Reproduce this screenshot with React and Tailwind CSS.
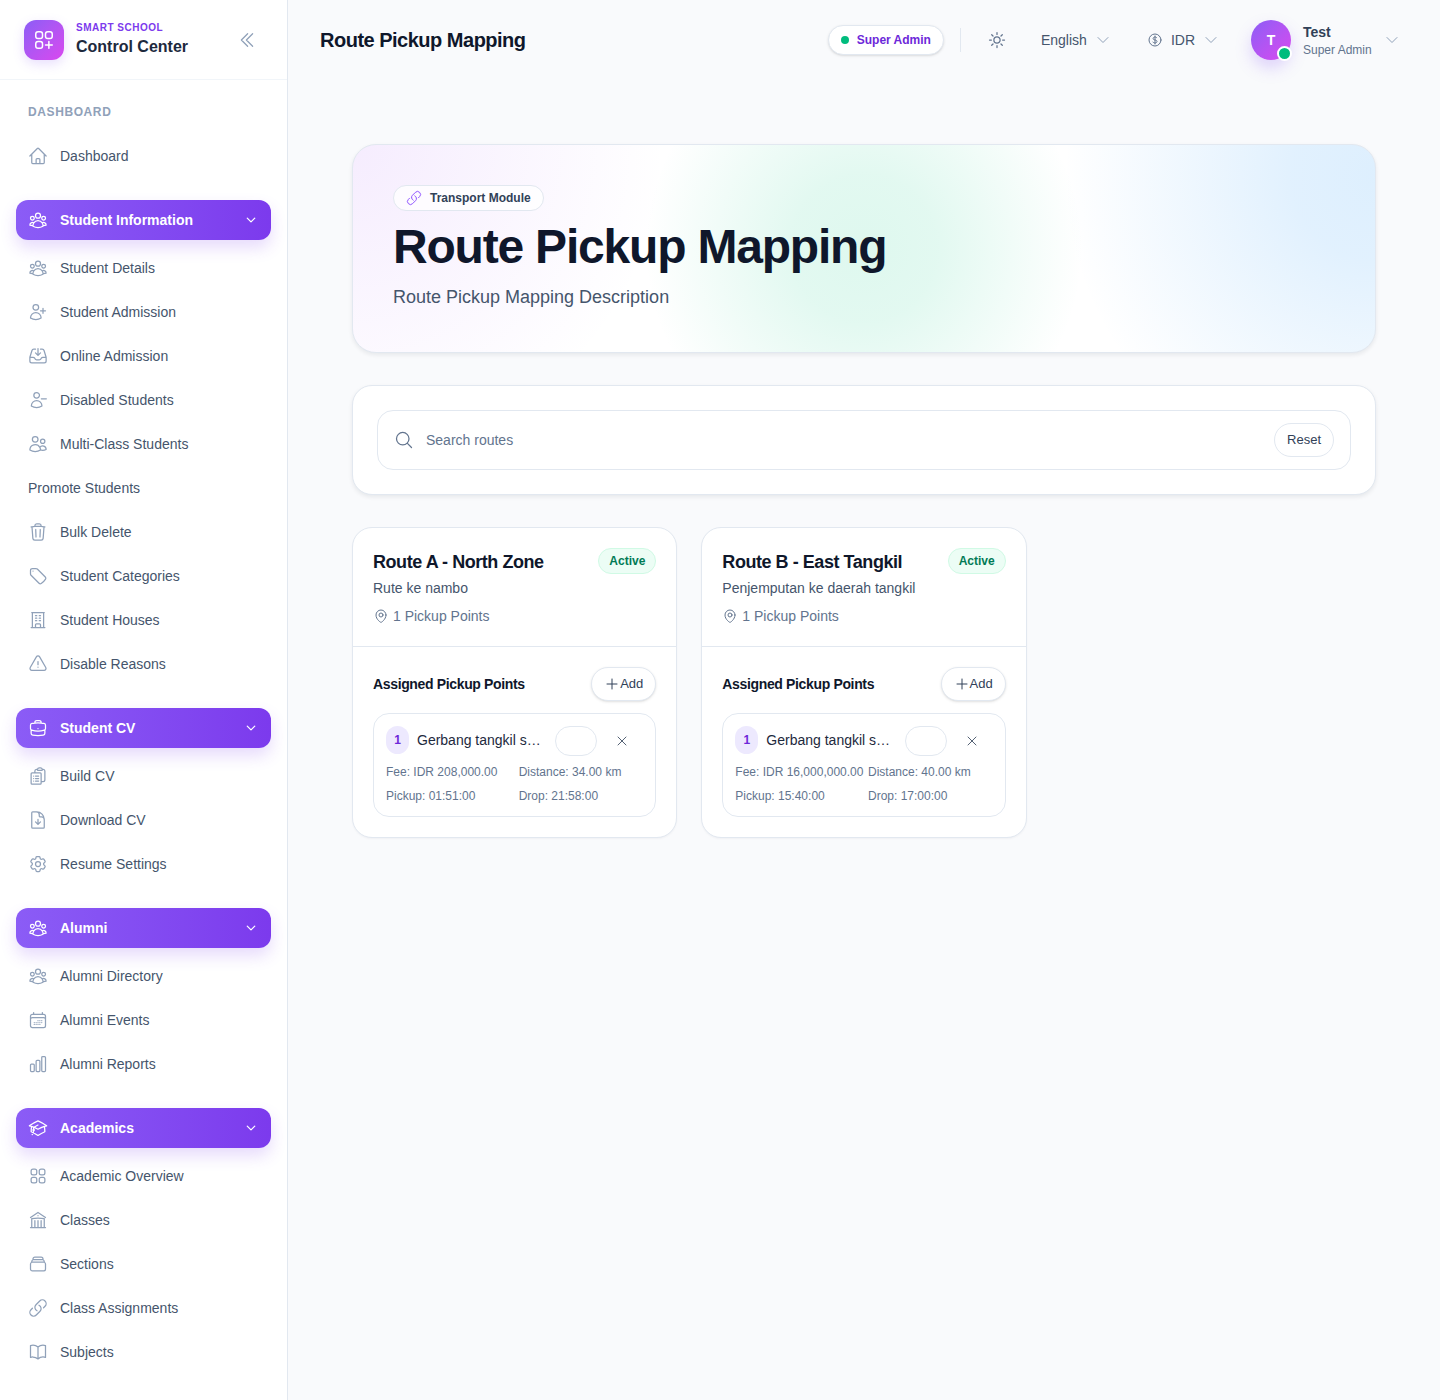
import React from "react";
import {
  HiOutlineUserGroup, HiOutlineHome, HiOutlineUserPlus, HiOutlineInboxArrowDown, HiOutlineUserMinus, HiOutlineUsers,
  HiOutlineTrash, HiOutlineTag, HiOutlineBuildingOffice, HiOutlineExclamationTriangle, HiOutlineBriefcase,
  HiOutlineClipboardDocumentList, HiOutlineDocumentArrowDown, HiOutlineCog6Tooth, HiOutlineCalendarDays, HiOutlineChartBar,
  HiOutlineAcademicCap, HiOutlineSquares2X2, HiOutlineBuildingLibrary, HiOutlineRectangleStack, HiOutlineLink, HiOutlineBookOpen,
  HiOutlineSun, HiOutlineCurrencyDollar, HiOutlineMapPin, HiOutlineMagnifyingGlass, HiOutlineXMark, HiOutlinePlus,
  HiOutlineChevronDown, HiOutlineChevronDoubleLeft, HiOutlineSquaresPlus,
} from "react-icons/hi2";

const groups = [
  { title: "Student Information", icon: HiOutlineUserGroup, items: [
    ["Student Details", HiOutlineUserGroup], ["Student Admission", HiOutlineUserPlus], ["Online Admission", HiOutlineInboxArrowDown],
    ["Disabled Students", HiOutlineUserMinus], ["Multi-Class Students", HiOutlineUsers], ["Promote Students", null],
    ["Bulk Delete", HiOutlineTrash], ["Student Categories", HiOutlineTag], ["Student Houses", HiOutlineBuildingOffice], ["Disable Reasons", HiOutlineExclamationTriangle],
  ]},
  { title: "Student CV", icon: HiOutlineBriefcase, items: [
    ["Build CV", HiOutlineClipboardDocumentList], ["Download CV", HiOutlineDocumentArrowDown], ["Resume Settings", HiOutlineCog6Tooth],
  ]},
  { title: "Alumni", icon: HiOutlineUserGroup, items: [
    ["Alumni Directory", HiOutlineUserGroup], ["Alumni Events", HiOutlineCalendarDays], ["Alumni Reports", HiOutlineChartBar],
  ]},
  { title: "Academics", icon: HiOutlineAcademicCap, items: [
    ["Academic Overview", HiOutlineSquares2X2], ["Classes", HiOutlineBuildingLibrary], ["Sections", HiOutlineRectangleStack],
    ["Class Assignments", HiOutlineLink], ["Subjects", HiOutlineBookOpen],
  ]},
];

function NavItem({ label, Icon }) {
  return (
    <div className="flex h-11 items-center gap-3 px-3 text-sm text-slate-600">
      {Icon && <Icon className="h-5 w-5 shrink-0 text-slate-400" />}
      <span>{label}</span>
    </div>
  );
}

function Sidebar() {
  return (
    <aside className="flex h-[1400px] w-[288px] shrink-0 flex-col overflow-hidden border-r border-slate-200 bg-white">
      <div className="flex h-20 shrink-0 items-center justify-between border-b border-slate-100 pl-6 pr-[30px]">
        <div className="flex items-center gap-3">
          <div className="flex h-10 w-10 items-center justify-center rounded-xl bg-gradient-to-br from-[#8b5cf6] to-[#d946ef] shadow-[0_4px_12px_rgba(139,92,246,0.2)]">
            <HiOutlineSquaresPlus className="h-6 w-6 text-white" />
          </div>
          <div className="-mt-px">
            <div className="text-[10px] font-semibold leading-[14px] tracking-[0.05em] text-[#7c3aed]">SMART SCHOOL</div>
            <div className="mt-[2px] text-base font-semibold leading-5 text-slate-800">Control Center</div>
          </div>
        </div>
        <HiOutlineChevronDoubleLeft className="h-5 w-5 text-slate-400" />
      </div>
      <nav className="px-4 pt-6">
        <div className="flex h-4 items-center px-3 text-xs font-semibold tracking-[0.05em] text-slate-400">DASHBOARD</div>
        <div className="mt-[14px]"><NavItem label="Dashboard" Icon={HiOutlineHome} /></div>
        {groups.map((g) => (
          <div key={g.title} className="mt-[22px]">
            <div className="flex h-10 items-center gap-3 rounded-xl bg-gradient-to-r from-[#8b5cf6] to-[#7c3aed] px-3 text-sm font-semibold text-white shadow-[0_8px_16px_rgba(124,58,237,0.18)]">
              <g.icon className="h-5 w-5 shrink-0" />
              <span className="flex-1">{g.title}</span>
              <HiOutlineChevronDown className="mr-[2px] h-3 w-3" strokeWidth={2.5} />
            </div>
            <div className="mt-1.5">
              {g.items.map(([label, Icon]) => <NavItem key={label} label={label} Icon={Icon} />)}
            </div>
          </div>
        ))}
      </nav>
    </aside>
  );
}

function TopBar() {
  return (
    <header className="flex h-20 items-center justify-between pl-8 pr-[40px]">
      <h1 className="text-xl font-bold tracking-tight text-slate-900">Route Pickup Mapping</h1>
      <div className="flex items-center">
        <div className="flex h-[30px] items-center gap-2 rounded-full border border-slate-200 bg-white px-3 shadow-sm">
          <span className="h-2 w-2 rounded-full bg-emerald-500" />
          <span className="text-xs font-bold text-[#6d28d9]">Super Admin</span>
        </div>
        <div className="mx-4 h-6 w-px bg-slate-200" />
        <HiOutlineSun className="ml-[10px] h-5 w-5 text-slate-500" />
        <div className="ml-[34px] flex items-center gap-2 text-sm text-slate-600">
          English <HiOutlineChevronDown className="h-4 w-4 text-slate-400" />
        </div>
        <div className="ml-[36px] flex items-center gap-2 text-sm text-slate-600">
          <HiOutlineCurrencyDollar className="h-4 w-4 text-slate-500" /> IDR
          <HiOutlineChevronDown className="h-4 w-4 text-slate-400" />
        </div>
        <div className="relative ml-8 flex h-10 w-10 items-center justify-center rounded-full bg-gradient-to-br from-[#8b5cf6] to-[#d946ef] text-sm font-bold text-white shadow-[0_8px_16px_rgba(139,92,246,0.25)]">
          T
          <span className="absolute -bottom-px -right-px h-[15px] w-[15px] rounded-full border-2 border-white bg-emerald-500" />
        </div>
        <div className="ml-3 w-[76px]">
          <div className="text-sm font-semibold leading-5 text-slate-700">Test</div>
          <div className="text-xs leading-4 text-slate-500">Super Admin</div>
        </div>
        <HiOutlineChevronDown className="ml-[5px] h-4 w-4 text-slate-400" />
      </div>
    </header>
  );
}

function RouteCard({ title, desc, fee, dist, pickup, drop }) {
  return (
    <div className="overflow-hidden rounded-[20px] border border-slate-200 bg-white shadow-[0_1px_2px_rgba(15,23,42,0.04)]">
      <div className="h-[119px] border-b border-slate-200 px-5 pt-5">
        <div className="flex items-start justify-between">
          <div className="pt-[2px] text-lg font-bold leading-6 tracking-tight text-slate-900">{title}</div>
          <span className="flex h-[26px] items-center rounded-full border border-emerald-100 bg-emerald-50 px-[10px] text-xs font-semibold text-emerald-700">Active</span>
        </div>
        <p className="mt-[4px] text-sm leading-5 text-slate-600">{desc}</p>
        <div className="mt-2 flex items-center gap-1 text-sm leading-5 text-slate-500">
          <HiOutlineMapPin className="h-4 w-4 text-slate-500" />
          1 Pickup Points
        </div>
      </div>
      <div className="px-5 pb-5 pt-5">
        <div className="flex items-center justify-between">
          <div className="text-sm font-bold tracking-tight text-slate-900">Assigned Pickup Points</div>
          <button className="flex h-[34px] items-center rounded-full border border-slate-200 bg-white px-3 text-[13px] text-slate-700 shadow-sm">
            <HiOutlinePlus className="h-4 w-4" />Add
          </button>
        </div>
        <div className="mt-3 rounded-2xl border border-slate-200 p-3">
          <div className="flex items-start">
            <span className="flex h-7 w-[23px] items-center justify-center rounded-full bg-violet-100 text-xs font-bold text-[#6d28d9]">1</span>
            <span className="ml-2 min-w-0 flex-1 truncate text-sm leading-7 text-slate-800">Gerbang tangkil setelah</span>
            <span className="ml-3 h-[30px] w-[42px] rounded-full border border-slate-200 bg-white" />
            <span className="ml-1 flex h-[30px] w-[42px] items-center justify-center text-slate-700">
              <HiOutlineXMark className="h-4 w-4" strokeWidth={1.25} />
            </span>
          </div>
          <div className="mt-2 grid grid-cols-2 gap-x-2 gap-y-2 whitespace-nowrap text-xs leading-4 text-slate-500">
            <div>Fee: {fee}</div>
            <div>Distance: {dist}</div>
            <div>Pickup: {pickup}</div>
            <div>Drop: {drop}</div>
          </div>
        </div>
      </div>
    </div>
  );
}

export default function App() {
  return (
    <div className="flex min-h-[1400px] bg-[#f9fafc] font-['Liberation_Sans',Arial,sans-serif]">
      <Sidebar />
      <div className="min-w-0 flex-1">
        <TopBar />
        <main className="px-16 pt-16">
          <section className="h-[209px] rounded-3xl border border-slate-200 bg-white bg-[radial-gradient(circle_at_0%_0%,rgba(168,85,247,0.11),transparent_30%),radial-gradient(circle_at_50%_50%,rgba(52,211,153,0.16),rgba(52,211,153,0.14)_14%,transparent_42%),radial-gradient(circle_at_100%_15%,rgba(56,160,248,0.17),rgba(56,160,248,0.15)_8%,transparent_30%),linear-gradient(#ffffff,#ffffff)] p-10 shadow-[0_2px_4px_rgba(15,23,42,0.08)]">
            <div className="inline-flex h-[26px] items-center gap-2 rounded-full border border-slate-200 bg-white/80 px-3 text-xs font-semibold text-slate-700">
              <HiOutlineLink className="h-4 w-4 text-violet-500" />
              Transport Module
            </div>
            <h2 className="mt-1 text-5xl font-bold leading-[60px] tracking-tight text-slate-900">Route Pickup Mapping</h2>
            <p className="mt-[6px] text-lg leading-7 text-slate-600">Route Pickup Mapping Description</p>
          </section>
          <section className="mt-8 rounded-[20px] border border-slate-200 bg-white p-6 shadow-[0_2px_4px_rgba(15,23,42,0.08)]">
            <div className="flex h-[60px] items-center rounded-2xl border border-slate-200 bg-white pl-4 pr-4">
              <HiOutlineMagnifyingGlass className="h-5 w-5 text-slate-500" />
              <span className="ml-3 flex-1 text-sm text-slate-500">Search routes</span>
              <button className="flex h-[34px] items-center rounded-full border border-slate-200 bg-white px-3 text-[13px] text-slate-700">Reset</button>
            </div>
          </section>
          <section className="mt-8 grid grid-cols-3 gap-6">
            <RouteCard title="Route A - North Zone" desc="Rute ke nambo" fee="IDR 208,000.00" dist="34.00 km" pickup="01:51:00" drop="21:58:00" />
            <RouteCard title="Route B - East Tangkil" desc="Penjemputan ke daerah tangkil" fee="IDR 16,000,000.00" dist="40.00 km" pickup="15:40:00" drop="17:00:00" />
          </section>
        </main>
      </div>
    </div>
  );
}
